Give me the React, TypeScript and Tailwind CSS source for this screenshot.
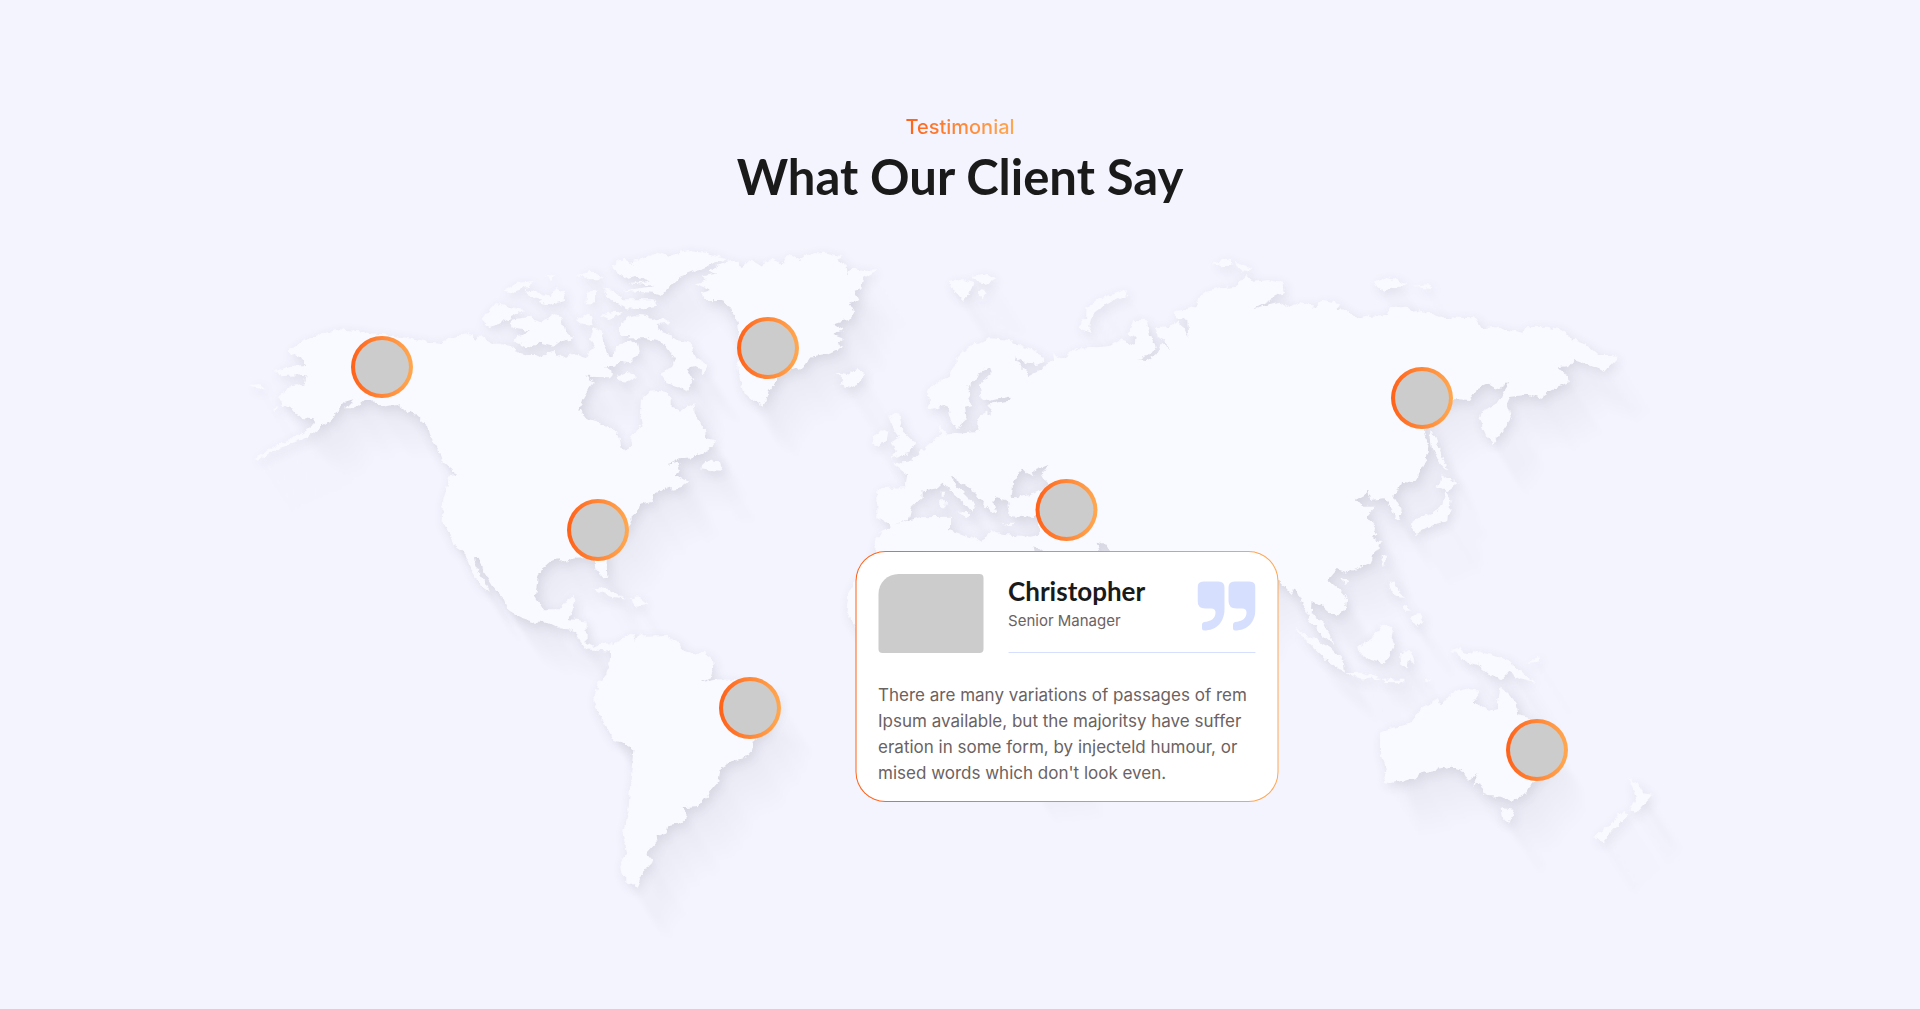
import React from "react";

/* ---------- World map geometry (canvas units: 4320 x 2040) ---------- */

type Point = [number, number];

function pts(dx: number, dy: number, list: string): Point[] {
  return list
    .trim()
    .split(/\s+/)
    .map((pair) => {
      const [x, y] = pair.split(",").map(Number);
      return [x + dx, y + dy] as Point;
    });
}

const toPath = (points: Point[]) =>
  "M" + points.map(([x, y]) => `${x} ${y}`).join("L") + "Z";

const nw = (l: string) => pts(0, 0, l);
const ne = (l: string) => pts(960, 0, l);
const sa = (l: string) => pts(480, 720, l);
const eu = (l: string) => pts(1830, 0, l);
const as = (l: string) => pts(2880, 0, l);
const oc = (l: string) => pts(3060, 840, l);

const northAmerica = [
  ...nw(
    "140,328 165,322 185,308 205,296 235,285 265,276 300,266 308,262 318,270 350,272 390,280 440,284 480,290 530,298 565,306 605,308 612,300 640,292 680,280 690,290 700,284 708,300 720,286 735,298 755,308 780,308 815,316 825,334 860,345 885,345 905,358 920,340 940,332 950,345 975,350 1000,342 1035,355 1045,335 1065,325 1050,300 1062,262 1085,268 1090,310 1105,350 1140,355 1125,380 1095,382 1120,398 1110,412 1035,410 1065,425 1045,450 1030,475 1018,508 1040,535 1075,545 1100,560 1130,575 1140,600 1145,625 1158,635 1170,620 1172,590 1190,575",
  ),
  ...ne(
    "245,550 240,520 243,480 260,465 270,455 295,452 325,458 335,475 335,500 360,515 385,498 400,490 405,520 420,550 435,570 440,595 465,600 458,620 430,640 400,652 360,655 320,675 352,668 360,690 352,705 385,725 360,745 335,750 335,738 290,755 275,770 280,785 240,795 232,820 210,840",
  ),
  ...sa(
    "680,150 620,200 620,245 622,290 608,292 590,270 585,245 555,228 530,230 505,245 480,238 450,242 425,265 412,300 405,350 430,388 480,388 495,365 525,345 520,380 508,418 535,420 560,425 560,490 580,500 600,492 640,490 640,515 590,512 565,512 540,480 520,450 480,445 440,425 400,425 360,412 325,390 310,355 280,320 255,280 235,230 222,232 225,250 245,290 270,335 240,315 215,275 190,215 160,195 145,150 125,120 130,60 145,0",
  ),
  ...nw(
    "622,710 645,705 640,690 605,660 595,630 570,590 560,555 530,530 515,512 505,520 470,492 430,500 395,480 375,480 345,505 315,505 340,478 315,485 290,515 280,535 240,562 205,590 150,612 100,632 50,662 42,656 100,620 160,594 215,560 225,535 175,530 160,510 130,495 115,470 150,440 195,430 200,405 130,408 105,395 150,378 203,375 185,355 150,340",
  ),
];

const southAmerica = sa(
  "630,500 650,490 680,465 697,462 703,482 720,460 740,470 800,468 830,485 855,512 880,522 910,515 935,535 940,565 930,595 900,608 940,600 960,598 1000,600 1060,620 1130,640 1140,670 1100,750 1062,785 1055,815 1040,832 1000,842 962,865 955,905 930,935 895,978 850,982 862,1010 840,1030 805,1035 800,1060 770,1068 772,1085 740,1120 758,1140 725,1185 710,1222 690,1210 665,1185 660,1150 682,1120 668,1060 685,1000 690,920 700,810 680,792 640,780 620,740 595,700 580,660 595,610 620,580 630,545",
);

const greenland = ne(
  "405,130 440,122 425,110 470,100 440,95 500,65 530,62 545,85 570,60 600,75 640,55 660,70 690,45 720,60 740,42 800,38 850,50 830,60 860,75 862,100 880,85 910,90 955,88 910,115 905,140 880,150 895,180 870,190 885,215 865,240 820,250 850,270 820,282 855,295 830,312 850,320 800,342 750,350 730,380 700,390 660,400 655,420 630,450 620,480 608,500 575,480 550,460 540,420 535,380 540,300 530,250 510,200 480,180 430,180 420,160 450,150",
);

const eurasiaAfrica = [
  ...eu(
    "82,745 165,742 172,705 130,672 175,668 210,635 250,600 275,585 265,555 290,580 340,580 385,575 385,530 410,515 425,530 425,512 410,498 430,490 478,482 475,470 420,482 395,475 390,435 425,400 420,380 385,400 375,425 352,440 355,470 365,495 345,500 350,540 320,568 305,545 295,500 280,495 240,510 232,450 270,420 300,405 325,350 360,315 420,295 480,300 530,325 575,345 580,365 560,375 520,365 490,348 510,375 540,405 580,385 590,370 612,360 610,340 635,358 680,325 710,325 780,318 810,300 855,315 860,295 835,285 850,240 890,240 900,290 920,315 900,345 865,358 890,360 920,340 935,308 965,330 940,300 920,290 915,265 960,262 985,240 1000,265 1015,290 1012,240 975,235 975,215 1040,200 1040,180 1070,155 1110,145",
  ),
  ...as(
    "110,140 120,125 140,105 160,125 205,120 250,130 255,155 220,175 160,205 240,185 262,200 300,190 345,200 370,180 420,190 410,210 440,212 470,235 500,228 560,225 570,205 620,200 645,218 665,212 740,235 770,230 825,232 845,265 880,262 930,268 970,280 975,262 1040,260 1085,268 1120,300 1160,315 1195,345 1240,345 1250,358 1215,395 1180,380 1125,360 1110,378 1070,382 1095,400 1110,425 1060,445 1015,475 980,462 930,468 920,490 935,535 905,580 880,612 860,590 838,540 845,515 890,490 915,450 928,428 905,440 885,450 870,430 835,445 810,480 770,478 720,500 680,540 675,575 685,620 680,660 640,730 605,725 582,770 605,810 600,840 585,835 575,800 550,775 510,780 505,755 465,778 485,800 525,800 500,830 525,860 535,885 515,892 545,905 520,945",
  ),
  ...oc(
    "335,125 280,150 260,160 230,150 205,180 240,210 262,235 258,265 228,292 200,270 185,255 155,245 152,280 190,310 210,345 220,375 185,345 150,300 130,260 105,205 95,222 55,180 0,210 -120,420 -300,180 -480,380 -580,740 -720,750 -820,460 -1140,400 -1225,310",
  ),
  ...pts(0, 0, "1820,1110 1825,1060 1850,1020 1905,935 1910,890 1950,858 1912,835"),
];

const inlandSeas = [
  eu(
    "130,855 175,840 185,800 215,775 215,755 260,748 280,728 305,755 345,790 365,815 375,795 320,740 305,708 335,728 370,752 400,790 425,820 440,815 430,785 440,775 470,780 478,825 565,832 568,885 540,890 440,880 420,870 400,905 340,885 300,870 300,830 210,832",
  ),
  eu("515,685 530,700 550,712 545,695 595,675 575,710 600,735 560,755 500,772 485,770 490,725"),
  eu("740,905 770,912 785,940 750,935"),
  eu("550,915 565,925 585,940 555,940"),
];

const mediterraneanIsles = [
  eu("272,755 284,755 284,770 272,770"),
  eu("270,778 288,778 286,802 272,802"),
  eu("325,818 360,815 350,832"),
  eu("452,850 490,848 480,856"),
];

const islands: Point[][] = [
  /* Aleutians */
  nw("30,435 60,432 75,445 50,445"),
  nw("95,505 110,498 108,512"),
  /* Canadian Arctic */
  nw("810,240 870,230 885,240 905,248 940,222 965,235 975,270 1000,295 960,305 940,320 900,310 860,325 820,305 835,285 870,275 820,265"),
  nw("725,240 762,192 800,198 852,210 810,235 780,252 745,262"),
  nw("895,190 910,178 862,165 858,150 900,160 930,168 950,145 972,155 975,180 920,195"),
  nw("788,155 830,130 885,122 860,142 810,160"),
  nw("915,112 950,105 930,120"),
  nw("1040,160 1065,152 1065,190 1040,190"),
  nw("1008,240 1050,218 1058,255 1020,250"),
  nw("1010,105 1050,95 1095,118 1060,118"),
  nw("1080,225 1130,212 1145,222 1105,238"),
  ne("130,145 160,150 185,178 280,178 292,200 250,208 200,205 150,178"),
  ne("155,75 190,55 225,80 210,65 250,55 290,38 330,48 380,33 440,38 500,55 455,75 405,92 360,110 330,140 305,168 280,158 185,152 240,145 285,138 205,130 270,122 225,108 195,118 160,90"),
  ne("60,105 100,95 130,115 85,118"),
  ne("180,245 215,228 230,225 225,265 205,285 180,285"),
  ne("210,265 235,222 265,225 275,240 310,235 335,250 290,255 300,275 330,285 350,300 395,310 400,345 445,375 428,400 405,378 380,385 400,420 378,455 350,440 320,430 300,400 335,385 345,355 310,310 260,295 205,295"),
  ne("165,315 230,305 238,340 205,370 160,360"),
  ne("175,408 200,395 228,412 205,425 178,422"),
  /* Atlantic and Caribbean */
  ne("830,400 860,405 890,388 912,400 905,425 870,445 840,435 850,420"),
  ne("420,685 450,655 460,668 480,670 488,692 450,690"),
  sa("580,328 600,322 640,335 675,355 645,352 600,335"),
  sa("690,358 725,355 745,372 705,378"),
  /* Northern Europe */
  eu("118,530 140,515 155,540 150,560 175,590 195,610 180,638 120,655 142,632 125,608 150,592 130,565"),
  eu("66,612 72,590 92,568 115,575 110,605 80,620"),
  eu("298,125 340,118 370,130 360,160 340,182 320,160 305,140"),
  eu("365,108 400,102 438,115 410,132 385,125"),
  eu("378,158 395,148 410,160 398,174"),
  eu("830,150 828,165 770,190 722,230 715,255 725,282 683,265 708,235 710,205 750,175"),
  /* Siberian coast and Japan */
  as("35,72 90,53 95,78 60,78"),
  as("108,65 155,85 125,98"),
  as("518,130 560,113 622,130 600,140 550,152"),
  as("640,138 680,133 705,145"),
  as("690,570 705,590 720,630 742,692 715,665 695,620"),
  as("725,700 770,728 740,752 705,742 720,730"),
  as("735,750 752,780 745,842 700,855 650,882 628,855 660,830 710,815 725,790"),
  /* South-east Asia */
  oc("105,328 150,348 215,385 250,420 255,455 200,420"),
  oc("255,460 310,458 365,478 300,475"),
  oc("370,479 430,479 430,487 370,486"),
  oc("295,380 340,350 370,310 400,325 395,350 405,375 375,430 330,420 300,400"),
  oc("420,400 450,390 468,435 448,415 442,445 425,440"),
  oc("385,185 405,185 415,215 435,235 400,225"),
  oc("450,295 478,278 492,305 470,318"),
  oc("425,262 440,255 450,275 435,275"),
  oc("362,105 378,108 372,142"),
  oc("240,172 270,180 252,192"),
  oc("570,390 600,382 620,405 650,393 740,418 770,445 825,485 780,475 745,455 722,480 690,465 655,435 620,425"),
  oc("800,430 840,408 832,425"),
  oc("490,478 515,475 500,488"),
  /* Oceania */
  oc("360,635 455,605 480,570 530,535 545,555 575,520 610,508 655,515 638,545 690,572 710,568 722,500 745,520 770,550 775,585 830,600 870,650 880,720 815,790 800,820 755,842 725,830 680,828 660,790 640,800 655,755 625,785 605,750 575,740 480,760 470,775 390,790 368,785 380,750 360,690"),
  oc("725,865 765,870 745,912 730,900"),
  oc("1105,772 1130,790 1150,820 1178,825 1130,880 1108,868 1130,830"),
  oc("1090,870 1105,888 1060,930 1030,965 998,950 1050,915"),
];

const landPath =
  [northAmerica, southAmerica, greenland].map(toPath).join("") + islands.map(toPath).join("");
const oldWorldPath = [eurasiaAfrica, ...inlandSeas, ...mediterraneanIsles].map(toPath).join("");

/* Steps of the long shadow: offset along the light direction and strength */
const castShadow = Array.from({ length: 13 }, (_, i) => ({
  dx: 10 + i * 9,
  dy: 17 + i * 14,
  opacity: 0.0055 - i * 0.00035,
}));

function WorldMap() {
  return (
    <svg viewBox="0 0 4320 2040" className="block h-full w-full overflow-visible" aria-hidden="true">
      <defs>
        <filter id="coast" filterUnits="userSpaceOnUse" x="-60" y="-60" width="4440" height="2160">
          <feTurbulence type="fractalNoise" baseFrequency="0.05" numOctaves="3" seed="4" result="n" />
          <feDisplacementMap in="SourceGraphic" in2="n" scale="19" xChannelSelector="R" yChannelSelector="G" />
          <feGaussianBlur stdDeviation="1.8" />
        </filter>
        <filter id="soft" filterUnits="userSpaceOnUse" x="-100" y="-100" width="4600" height="2400">
          <feGaussianBlur stdDeviation="17" />
        </filter>
        <filter id="long" filterUnits="userSpaceOnUse" x="-100" y="-100" width="4700" height="2600">
          <feGaussianBlur stdDeviation="6" />
        </filter>
        <g id="land" filter="url(#coast)">
          <path d={landPath} />
          <path d={oldWorldPath} fillRule="evenodd" />
        </g>
      </defs>
      <g fill="#38384a">
        <g filter="url(#long)">
          {castShadow.map((s) => (
            <use key={s.dx} href="#land" x={s.dx} y={s.dy} opacity={s.opacity} />
          ))}
        </g>
        <use href="#land" x="7" y="10" opacity="0.11" filter="url(#soft)" />
      </g>
      <use href="#land" fill="#f9faff" />
    </svg>
  );
}

/* ---------- Testimonials ---------- */

interface Client {
  place: string;
  left: string;
  top: string;
}

const clients: Client[] = [
  { place: "Alaska", left: "left-[9.86%]", top: "top-[18.68%]" },
  { place: "United States", left: "left-[24.86%]", top: "top-[42.65%]" },
  { place: "Greenland", left: "left-[36.67%]", top: "top-[15.88%]" },
  { place: "Brazil", left: "left-[35.42%]", top: "top-[68.82%]" },
  { place: "Russia", left: "left-[82.08%]", top: "top-[23.24%]" },
  { place: "Australia", left: "left-[90.07%]", top: "top-[75%]" },
];

function Pin({ place }: { place: string }) {
  return (
    <button
      type="button"
      aria-label={`Client in ${place}`}
      className="block size-[62px] rounded-full bg-linear-to-r from-[#ff6117] to-[#ffa850] p-1"
    >
      <span className="block size-full rounded-full bg-[#cccccc]" />
    </button>
  );
}

function QuoteMark() {
  return (
    <svg viewBox="0 0 58 50" className="h-[50px] w-[58px] shrink-0" fill="#d7dfff" aria-hidden="true">
      <path id="quote" d="M6 0.5H21Q27 0.5 27 6.5V28C27 41 19 49.5 6.500 49.500Q4.500 49.500 4.500 47.500V43.500Q4.500 41.500 6.500 41C14 40.500 18 37 18 31.500Q18 27.500 13.500 27.500H8Q0 27.500 0 20V6.500Q0 0.500 6 0.500Z" />
      <use href="#quote" x="31" />
    </svg>
  );
}

function TestimonialCard() {
  return (
    <figure className="w-[423px] rounded-[30px] bg-linear-to-r from-[#ff6117] to-[#ffa850] p-px">
      <div className="rounded-[29px] bg-white px-[22px] pt-[22px] pb-[15px]">
        <figcaption className="flex gap-[25px]">
          <div className="h-[79px] w-[105px] shrink-0 rounded-[4px] rounded-tl-[20px] bg-[#cccccc]" />
          <div className="flex flex-1 justify-between border-b border-[#d7dfff] pt-0.5">
            <div>
              <h3 className="font-['Lato',sans-serif] text-[26px] leading-[30px] font-bold text-[#1a1a1a]">
                Christopher
              </h3>
              <p className="mt-0.5 text-[15px] leading-[26px] text-[#6b6262]">Senior Manager</p>
            </div>
            <div className="pt-[5px]">
              <QuoteMark />
            </div>
          </div>
        </figcaption>
        <blockquote className="mt-[29px] text-[17px] leading-[26px] whitespace-nowrap text-[#6b6262]">
          There are many variations of passages of rem
          <br />
          Ipsum available, but the majoritsy have suffer
          <br />
          eration in some form, by injecteld humour, or
          <br />
          mised words which don't look even.
        </blockquote>
      </div>
    </figure>
  );
}

export default function App() {
  return (
    <main className="min-h-screen overflow-hidden bg-[#f4f4ff] pt-28 pb-20 font-['Inter',sans-serif]">
      <header className="flex flex-col items-center gap-1 text-center">
        <p className="bg-linear-to-r from-[#ff6117] to-[#ffa850] bg-clip-text text-xl leading-[30px] font-medium text-transparent">
          Testimonial
        </p>
        <h2 className="font-['Lato',sans-serif] text-[49px] leading-[60px] font-bold text-[#1a1a1a]">
          What Our Client Say
        </h2>
      </header>
      <section aria-label="Clients around the world" className="relative mx-auto mt-[34px] aspect-[36/17] w-full max-w-[1440px]">
        <WorldMap />
        {clients.map((c) => (
          <div key={c.place} className={`absolute -translate-x-1/2 -translate-y-1/2 ${c.left} ${c.top}`}>
            <Pin place={c.place} />
          </div>
        ))}
        <div className="absolute top-[39.71%] left-[57.4%] flex -translate-x-1/2 -translate-y-[31px] flex-col items-center gap-[10px]">
          <Pin place="Turkey" />
          <TestimonialCard />
        </div>
      </section>
    </main>
  );
}
